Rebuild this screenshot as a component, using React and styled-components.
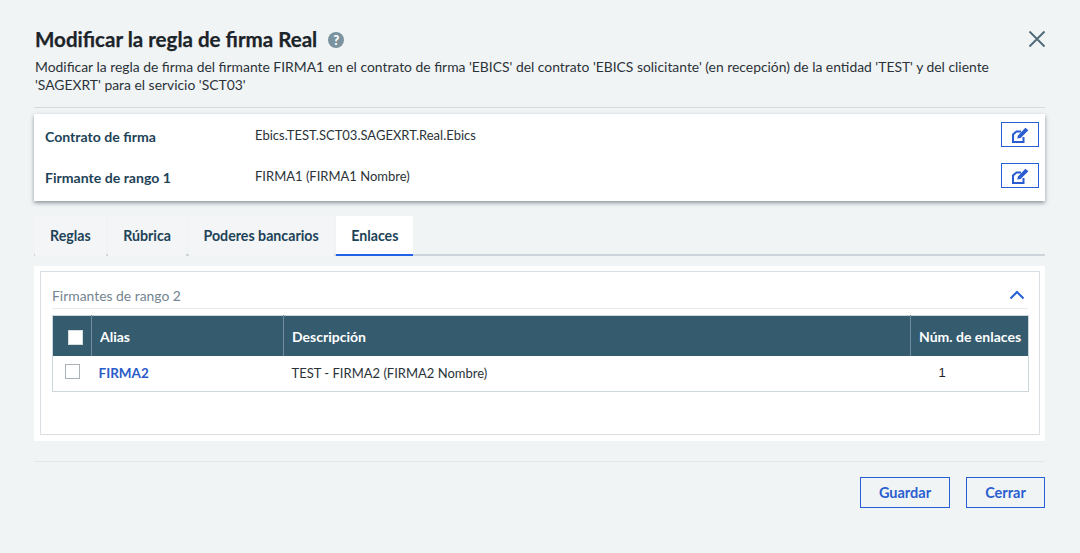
import React from 'react';
import styled, { createGlobalStyle } from 'styled-components';

const GlobalStyle = createGlobalStyle`
    html, body {
        margin: 0;
        padding: 0;
        background: #f1f4f5;
    }
    * {
        box-sizing: border-box;
    }
`;

const Modal = styled.div`
    width: 1080px;
    height: 553px;
    padding: 27px 35px 0 34px;
    overflow: hidden;
    font-family: 'Lato', 'Liberation Sans', sans-serif;
    color: #232b31;
    background: #f1f4f5;
`;
const TitleRow = styled.div`
    display: flex;
    align-items: center;
    justify-content: space-between;
    height: 24px;
`;
const TitleGroup = styled.div`
    display: flex;
    align-items: center;
    gap: 11px;
    padding-left: 1px;
`;
const Title = styled.h1`
    margin: 0;
    font-size: 20.55px;
    line-height: 24px;
    font-weight: 700;
    color: #1c2429;
    -webkit-text-stroke: 0.25px #1c2429;
`;
const HelpBadge = styled.span`
    display: flex;
    align-items: center;
    justify-content: center;
    width: 16px;
    height: 16px;
    margin-top: 2px;
    border-radius: 50%;
    background: #7b929f;
    color: #fff;
    font-size: 13px;
    font-weight: 900;
`;
const CloseButton = styled.button`
    display: flex;
    padding: 0;
    margin-right: -2px;
    border: 0;
    background: none;
`;
const Subtitle = styled.p`
    margin: 7px 0 0;
    padding-left: 1px;
    font-size: 13.88px;
    line-height: 18px;
    color: #2b3339;
`;
const Divider = styled.hr`
    margin: ${(p) => p.$margin};
    border: 0;
    height: 1px;
    background: ${(p) => p.$color};
`;
const SummaryCard = styled.section`
    display: flex;
    flex-direction: column;
    gap: 16px;
    height: 87px;
    padding: 8px 6px 0 11px;
    background: #fff;
    box-shadow: 0 2px 4px rgba(60, 75, 85, 0.55);
`;
const SummaryRow = styled.div`
    display: grid;
    grid-template-columns: 210px 1fr 38px;
    align-items: center;
    height: 25px;
`;
const SummaryLabel = styled.span`
    font-size: 14.1px;
    font-weight: 700;
    color: #1e4358;
    padding-top: 3px;
`;
const SummaryValue = styled.span`
    font-size: 13px;
    color: #2b3339;
`;
const EditButton = styled.button`
    display: flex;
    align-items: center;
    justify-content: center;
    width: 38px;
    height: 25px;
    padding: 0;
    background: #fff;
    border: 1px solid #2560d6;
`;
const Tabs = styled.nav`
    display: flex;
    align-items: stretch;
    gap: 2.5px;
    height: 40px;
    margin-top: 15px;
    padding-left: 1px;
    border-bottom: 2px solid #cdd5da;
`;
const Tab = styled.div`
    display: flex;
    align-items: center;
    height: 40px;
    padding: 1px 15px 0;
    font-size: 14.2px;
    font-weight: 700;
    color: #1e4358;
    background: ${(p) => (p.$active ? '#fff' : '#f3f5f6')};
    border-bottom: 2px solid ${(p) => (p.$active ? '#2061e6' : 'transparent')};
`;
const Panel = styled.section`
    height: 175px;
    margin-top: 10px;
    padding: 5px 5px 6px 6px;
    background: #fff;
`;
const Fieldset = styled.div`
    height: 100%;
    padding: 0 11px;
    border: 1px solid #d9dfe3;
`;
const SectionHeader = styled.div`
    display: flex;
    align-items: center;
    justify-content: space-between;
    height: 37px;
    padding: 10px 3px 0 0;
    border-bottom: 1px solid #e6eaec;
    font-size: 13.9px;
    color: #74858f;
`;
const TableFrame = styled.table`
    width: 976px;
    margin-top: 6px;
    border-collapse: collapse;
    table-layout: fixed;
    border: 1px solid #cdd6db;
    font-size: 13px;
`;
const HeadCell = styled.th`
    height: 40px;
    padding: 1px 8px 0;
    background: #345b6e;
    color: #fff;
    font-size: 14px;
    font-weight: 700;
    text-align: left;
    white-space: nowrap;
    border-left: 1px solid #6f8d9c;
    &:first-child {
        border-left: 0;
    }
`;
const BodyCell = styled.td`
    height: 36px;
    padding: 0 8px 1px;
    color: #2b3339;
`;
const CountCell = styled(BodyCell)`
    padding-left: 28px;
    font-family: 'Liberation Sans', sans-serif;
    color: #1c2429;
`;
const Check = styled.span`
    display: block;
    width: 15px;
    height: 15px;
    margin: ${(p) => (p.$head ? '2px 0 0 7px' : '-3px 0 0 4px')};
    background: #fff;
    border: 1px solid ${(p) => (p.$head ? '#d5dde1' : '#aab2b7')};
`;
const AliasLink = styled.a`
    margin-left: -1px;
    color: #2a5bc9;
    font-weight: 700;
    font-size: 13.5px;
    text-decoration: none;
`;
const Footer = styled.footer`
    display: flex;
    justify-content: flex-end;
    gap: 16px;
`;
const FooterButton = styled.button`
    width: ${(p) => p.$width};
    height: 31px;
    padding: 0;
    background: transparent;
    border: 1px solid #2560d6;
    color: #2a5fd0;
    font-family: inherit;
    font-size: 14.5px;
    font-weight: 700;
`;

const EditIcon = () => (
    <svg width="17" height="16" viewBox="0 0 17 16">
        <path d="M9 4.5H4.5L1 7.5V15H11.5V10" fill="none" stroke="#2a5bd0" strokeWidth="2" />
        <path d="M5.2 11.6L6 8.4L13.4 0.8L16.4 3.2L8.6 11Z" fill="#2a5bd0" />
    </svg>
);

const HelpIcon = () => <HelpBadge>?</HelpBadge>;

const CloseIcon = () => (
    <svg width="20" height="20" viewBox="0 0 20 20">
        <path d="M2.5 2.5L17.5 17.5M17.5 2.5L2.5 17.5" fill="none" stroke="#4f6b7a" strokeWidth="1.9" />
    </svg>
);

const ChevronIcon = () => (
    <svg width="16" height="10" viewBox="0 0 16 10">
        <path d="M1.5 8.5L8 2L14.5 8.5" fill="none" stroke="#2560d6" strokeWidth="2" />
    </svg>
);

const summary = [
    { label: 'Contrato de firma', value: 'Ebics.TEST.SCT03.SAGEXRT.Real.Ebics' },
    { label: 'Firmante de rango 1', value: 'FIRMA1 (FIRMA1 Nombre)' },
];

const tabs = ['Reglas', 'Rúbrica', 'Poderes bancarios', 'Enlaces'];

function App() {
    return (
        <Modal>
            <GlobalStyle />
            <TitleRow>
                <TitleGroup>
                    <Title>Modificar la regla de firma Real</Title>
                    <HelpIcon />
                </TitleGroup>
                <CloseButton>
                    <CloseIcon />
                </CloseButton>
            </TitleRow>
            <Subtitle>
                Modificar la regla de firma del firmante FIRMA1 en el contrato de firma 'EBICS' del contrato 'EBICS
                solicitante' (en recepción) de la entidad 'TEST' y del cliente
                <br />
                'SAGEXRT' para el servicio 'SCT03'
            </Subtitle>
            <Divider $color="#d5dade" $margin="13px 0 6px" />
            <SummaryCard>
                {summary.map((row) => (
                    <SummaryRow key={row.label}>
                        <SummaryLabel>{row.label}</SummaryLabel>
                        <SummaryValue>{row.value}</SummaryValue>
                        <EditButton>
                            <EditIcon />
                        </EditButton>
                    </SummaryRow>
                ))}
            </SummaryCard>
            <Tabs>
                {tabs.map((tab) => (
                    <Tab key={tab} $active={tab === 'Enlaces'}>
                        {tab}
                    </Tab>
                ))}
            </Tabs>
            <Panel>
                <Fieldset>
                    <SectionHeader>
                        Firmantes de rango 2
                        <ChevronIcon />
                    </SectionHeader>
                    <TableFrame>
                        <colgroup>
                            <col width="39" />
                            <col width="192" />
                            <col width="627" />
                            <col width="118" />
                        </colgroup>
                        <thead>
                            <tr>
                                <HeadCell>
                                    <Check $head />
                                </HeadCell>
                                <HeadCell>Alias</HeadCell>
                                <HeadCell>Descripción</HeadCell>
                                <HeadCell>Núm. de enlaces</HeadCell>
                            </tr>
                        </thead>
                        <tbody>
                            <tr>
                                <BodyCell>
                                    <Check />
                                </BodyCell>
                                <BodyCell>
                                    <AliasLink href="#">FIRMA2</AliasLink>
                                </BodyCell>
                                <BodyCell>TEST - FIRMA2 (FIRMA2 Nombre)</BodyCell>
                                <CountCell>1</CountCell>
                            </tr>
                        </tbody>
                    </TableFrame>
                </Fieldset>
            </Panel>
            <Divider $color="#e4e8ea" $margin="20px 0 15px" />
            <Footer>
                <FooterButton $width="90px">Guardar</FooterButton>
                <FooterButton $width="79px">Cerrar</FooterButton>
            </Footer>
        </Modal>
    );
}

export default App;
